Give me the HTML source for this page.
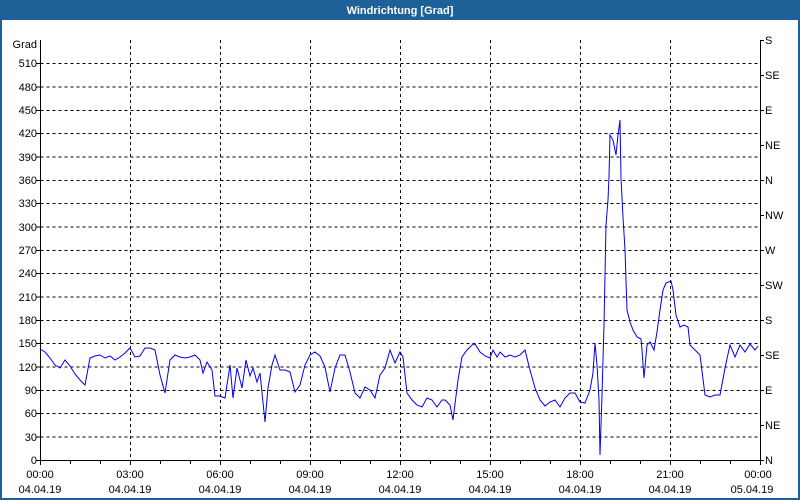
<!DOCTYPE html>
<html><head><meta charset="utf-8"><style>
html,body{margin:0;padding:0;width:800px;height:500px;overflow:hidden;background:#fff}
svg{display:block}
text{font-family:"Liberation Sans","DejaVu Sans",sans-serif;font-size:11px;fill:#000}
</style></head><body>
<svg width="800" height="500" viewBox="0 0 800 500" xmlns="http://www.w3.org/2000/svg">
<rect x="0" y="0" width="800" height="500" fill="#1e6098"/>
<rect x="2" y="20" width="796" height="478" fill="#fff"/>
<text x="400" y="14" text-anchor="middle" style="font-weight:bold;fill:#fff;font-size:11px">Windrichtung [Grad]</text>
<g stroke="#000" stroke-width="1" stroke-dasharray="3,3" fill="none">
<path d="M40.5 63.5H760M40.5 87H760M40.5 110.5H760M40.5 133.5H760M40.5 157H760M40.5 180.5H760M40.5 203.5H760M40.5 227H760M40.5 250.5H760M40.5 273.5H760M40.5 297H760M40.5 320.5H760M40.5 343.5H760M40.5 367H760M40.5 390.5H760M40.5 413.5H760M40.5 437H760"/>
<path d="M130.5 40V460M220.5 40V460M310.5 40V460M400.5 40V460M490.5 40V460M580.5 40V460M670.5 40V460"/>
</g>
<g stroke="#000" stroke-width="1" fill="none">
<path d="M40.5 40V460.5H760.5V40"/>
<path d="M36 63.5h4M36 87h4M36 110.5h4M36 133.5h4M36 157h4M36 180.5h4M36 203.5h4M36 227h4M36 250.5h4M36 273.5h4M36 297h4M36 320.5h4M36 343.5h4M36 367h4M36 390.5h4M36 413.5h4M36 437h4M36 460.5h4"/>
<path d="M760 40.5h4M760 75.5h4M760 110.5h4M760 145.5h4M760 180.5h4M760 215.5h4M760 250.5h4M760 285.5h4M760 320.5h4M760 355.5h4M760 390.5h4M760 425.5h4M760 460.5h4"/>
<path d="M40.5 460v5M70.5 460v4M100.5 460v4M130.5 460v5M160.5 460v4M190.5 460v4M220.5 460v5M250.5 460v4M280.5 460v4M310.5 460v5M340.5 460v4M370.5 460v4M400.5 460v5M430.5 460v4M460.5 460v4M490.5 460v5M520.5 460v4M550.5 460v4M580.5 460v5M610.5 460v4M640.5 460v4M670.5 460v5M700.5 460v4M730.5 460v4M760.5 460v5"/>
</g>
<g text-anchor="end">
<text x="37" y="48">Grad</text>
<text x="37" y="67">510</text><text x="37" y="91">480</text><text x="37" y="114">450</text><text x="37" y="137">420</text><text x="37" y="161">390</text><text x="37" y="184">360</text><text x="37" y="207">330</text><text x="37" y="231">300</text><text x="37" y="254">270</text><text x="37" y="277">240</text><text x="37" y="301">210</text><text x="37" y="324">180</text><text x="37" y="347">150</text><text x="37" y="371">120</text><text x="37" y="394">90</text><text x="37" y="417">60</text><text x="37" y="441">30</text><text x="37" y="464">0</text>
</g>
<g>
<text x="765" y="44">S</text><text x="765" y="79">SE</text><text x="765" y="114">E</text><text x="765" y="149">NE</text><text x="765" y="184">N</text><text x="765" y="219">NW</text><text x="765" y="254">W</text><text x="765" y="289">SW</text><text x="765" y="324">S</text><text x="765" y="359">SE</text><text x="765" y="394">E</text><text x="765" y="429">NE</text><text x="765" y="464">N</text>
</g>
<g text-anchor="middle">
<text x="40" y="478">00:00</text><text x="130" y="478">03:00</text><text x="220" y="478">06:00</text><text x="310" y="478">09:00</text><text x="400" y="478">12:00</text><text x="490" y="478">15:00</text><text x="580" y="478">18:00</text><text x="670" y="478">21:00</text><text x="758" y="478">00:00</text>
<text x="40" y="493">04.04.19</text><text x="130" y="493">04.04.19</text><text x="220" y="493">04.04.19</text><text x="310" y="493">04.04.19</text><text x="400" y="493">04.04.19</text><text x="490" y="493">04.04.19</text><text x="580" y="493">04.04.19</text><text x="670" y="493">04.04.19</text><text x="752" y="493">05.04.19</text>
</g>
<polyline fill="none" stroke="#0000ee" stroke-width="1" points="40,349 45,352 50,358 55,365 60,368 65,360 70,366 75,374 80,380 85,385 90,358 95,356 100,355 105,358 110,356 115,360 120,357 125,353 130,348 135,357 140,356 145,348 150,348 155,350 160,375 165,393 170,360 175,355 180,357 185,358 190,357 195,355 200,360 203,373 207,362 212,370 215,396 220,396 225,398 230,365 233,398 237,368 242,388 246,360 250,376 253,368 257,382 260,373 265,422 268,388 272,365 275,355 280,370 285,370 290,372 295,392 300,385 305,365 310,355 315,352 320,356 325,367 330,392 335,368 340,355 345,355 350,372 355,393 360,398 365,387 370,390 375,398 380,375 385,368 390,350 395,363 400,352 403,357 407,393 412,400 417,405 422,407 427,398 432,400 437,407 442,400 445,400 450,405 453,420 458,380 462,357 467,350 472,345 475,344 480,352 485,356 490,358 493,350 497,357 500,352 505,357 510,355 515,357 520,355 525,350 530,370 535,388 540,400 545,406 550,402 555,400 560,407 565,398 570,393 575,393 580,402 585,403 590,390 593,373 595,343 597,365 599,400 600,455 602,395 604,325 606,225 608,200 609,177 610,135 613,140 616,155 618,135 620,120 621,178 623,217 625,250 627,310 630,322 633,330 637,337 641,339 642,350 644,378 647,345 650,342 654,350 657,332 660,310 663,290 666,283 671,281 673,290 676,315 680,327 684,325 688,327 690,345 695,350 700,355 705,395 710,397 715,395 720,395 725,368 730,345 735,357 740,345 745,352 750,344 755,350 758,346"/>
</svg>
</body></html>
